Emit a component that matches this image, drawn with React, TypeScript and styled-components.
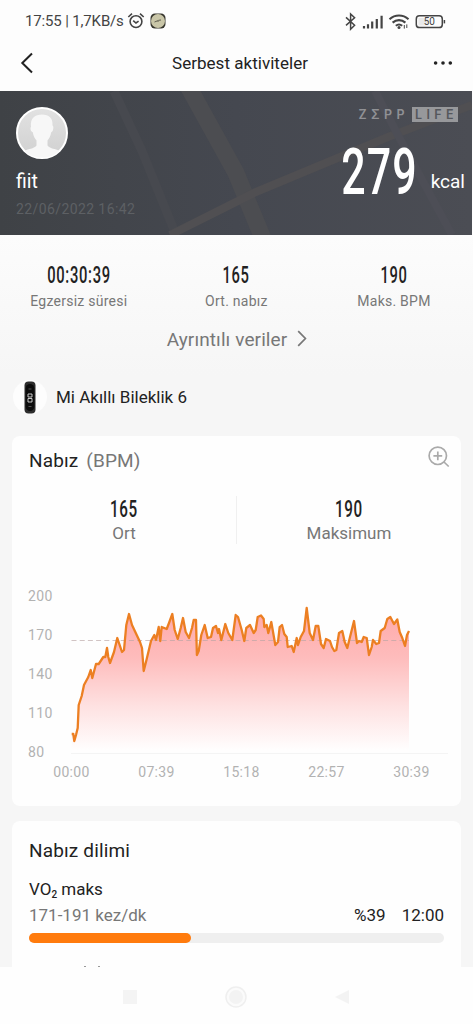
import styled, { createGlobalStyle } from "styled-components";

const heartRate: [number, number][] = [
  [71.7, 734], [73.3, 734], [74.3, 741], [76, 735], [77.7, 728], [78.7, 705], [81.7, 696], [84, 685],
  [88.3, 677], [90.7, 670], [92.3, 678], [96, 664], [98.7, 664], [103.3, 657], [105.3, 657], [107, 648],
  [108.3, 657], [110, 663], [114, 652], [117.3, 638], [122, 652], [124, 650], [126.3, 625], [129, 614],
  [132, 625], [140, 642], [142, 648], [143.7, 671], [146.7, 659], [151, 641], [154.3, 635], [156, 640],
  [158.7, 627], [160.3, 641], [161.7, 627], [166.7, 629], [169, 623], [172.3, 614], [174.7, 630], [177.7, 639],
  [180.7, 628], [183, 618], [185.7, 632], [189, 638], [192, 628], [193.7, 620], [196, 620], [196.9, 655],
  [198.7, 651], [201.3, 635], [204.7, 625], [207.7, 638], [211, 637], [213, 628], [216, 626], [218, 633],
  [219, 629], [221.3, 640], [225.3, 624], [228.3, 633], [232.3, 640], [235.7, 615], [238, 617], [241.7, 630],
  [244.3, 641], [246.3, 628], [250, 625], [253.7, 633], [255.7, 630], [257.7, 617], [261, 615.5], [263.7, 619],
  [264.3, 627], [266.7, 625], [268.3, 633], [271.3, 622], [275.3, 645], [278, 642], [279.7, 627], [282, 625],
  [284.3, 634], [286.7, 637], [287.7, 647], [291.7, 646], [293.7, 652], [296.7, 638], [298, 645], [300.7, 637],
  [304, 631], [306.7, 608], [309.7, 633], [313, 640], [315.7, 626], [318.3, 626], [321, 644], [323.7, 648],
  [326, 639], [330, 641], [332, 647], [334.3, 651], [336.3, 650], [339, 633], [342.3, 631], [344.7, 642],
  [347.3, 648], [351, 633], [354, 621], [357, 643], [359, 641], [361.7, 642], [363.7, 637], [366.7, 638],
  [369, 655], [371.7, 647], [373, 640], [376.3, 644], [379, 643], [380.7, 631], [384.7, 628], [387.3, 619],
  [390.3, 617], [394, 624], [397.3, 619.5], [399.7, 632], [402.3, 638], [405, 646], [407, 635], [409, 631],
];

const line = heartRate.map(([x, y]) => `${x},${y}`).join(" ");

const yTicks = [
  { label: "200", y: 600.5 },
  { label: "170", y: 639.5 },
  { label: "140", y: 679 },
  { label: "110", y: 718 },
  { label: "80", y: 757 },
];

const xTicks = [
  { label: "00:00", x: 71.5 },
  { label: "07:39", x: 156.5 },
  { label: "15:18", x: 241.5 },
  { label: "22:57", x: 326.5 },
  { label: "30:39", x: 411.5 },
];

const stats = [
  { value: "00:30:39", label: "Egzersiz süresi" },
  { value: "165", label: "Ort. nabız" },
  { value: "190", label: "Maks. BPM" },
];

function StatusIcons() {
  return (
    <svg width="104" height="20" viewBox="343 10 104 20" fill="none" stroke="#444" strokeWidth="1.5">
      <path d="M346 16.4l8.6 7.8-4 4V13l4 3.8-8.6 7.6" />
      <g strokeWidth="2.2">
        <path d="M364 27.5v-2.6M368 27.5v-4.2M372.2 27.5v-7M376.8 27.5v-9.6M381.6 27.5v-12.7" />
      </g>
      <g strokeWidth="2.1">
        <path d="M389.5 18.2c5.5-5 13.5-5 19 0M392.6 21.6c3.8-3.3 9-3.3 12.8 0M395.8 24.8c2-1.6 4.4-1.6 6.4 0" />
      </g>
      <circle cx="399" cy="26.6" r="1.5" fill="#444" stroke="none" />
      <path d="M404.3 24v3.6M406.8 23.4v3.6" strokeWidth="1" />
      <rect x="416.3" y="14.8" width="26" height="11.8" rx="3.2" />
      <path d="M418.4 16.9h10v7.6h-10z" fill="#e9e9e9" stroke="none" />
      <path d="M444.4 19v3.4" strokeWidth="1.5" />
      <text x="429.3" y="24.2" textAnchor="middle" fontSize="10" fill="#444" stroke="none">
        50
      </text>
    </svg>
  );
}

function HeartChart() {
  return (
    <svg width="449" height="226" viewBox="12 580 449 226">
      <defs>
        <linearGradient id="fade" gradientUnits="userSpaceOnUse" x1="0" y1="608" x2="0" y2="750">
          <stop offset="0" stopColor="#ffa8a8" />
          <stop offset="0.35" stopColor="#febcbc" />
          <stop offset="0.7" stopColor="#fee2e2" />
          <stop offset="1" stopColor="#fffefe" />
        </linearGradient>
      </defs>
      <path d="M71 753.5H448" stroke="#f4f4f4" />
      <polygon points={`71.7,752 ${line} 409,752`} fill="url(#fade)" />
      <path d="M71.5 640.5H409" stroke="#b9a5a5" strokeOpacity="0.65" strokeDasharray="5 3.2" />
      <polyline points={line} fill="none" stroke="#ec7f22" strokeWidth="2.3" strokeLinejoin="round" />
      <g fontSize="14" fill="#b2b2b2" letterSpacing="0.35">
        {yTicks.map((t) => (
          <text key={t.label} x="28" y={t.y}>
            {t.label}
          </text>
        ))}
        {xTicks.map((t) => (
          <text key={t.label} x={t.x} y="777" textAnchor="middle">
            {t.label}
          </text>
        ))}
      </g>
    </svg>
  );
}

export default function App() {
  return (
    <Phone>
      <GlobalStyle />

      <StatusBar>
        <span>17:55 | 1,7KB/s</span>
        <svg width="18" height="18" viewBox="0 0 18 18" fill="none" stroke="#444" strokeWidth="1.6">
          <circle cx="9" cy="9.6" r="5.9" />
          <path d="M1.3 5L5 1.7M16.7 5L13 1.7M6.2 8.6L9 11l2.6-1.8" />
        </svg>
        <svg className="app" width="16" height="16" viewBox="0 0 16 16">
          <rect x="0.5" y="0.5" width="15" height="15" rx="4.5" fill="#35342c" />
          <circle cx="8" cy="8" r="7" fill="#c9c6a8" />
          <path d="M4.5 9l3-1.2M8.5 7.3L11 7M8 7v2" stroke="#555346" strokeWidth="0.9" />
        </svg>
        <StatusIcons />
      </StatusBar>

      <NavBar>
        <svg width="14" height="22" viewBox="0 0 14 22" fill="none" stroke="#222" strokeWidth="2">
          <path d="M12 1.5L2.3 11 12 20.5" />
        </svg>
        <h1>Serbest aktiviteler</h1>
        <svg width="20" height="6" viewBox="0 0 20 6" fill="#222">
          <circle cx="2.6" cy="3" r="1.8" />
          <circle cx="10" cy="3" r="1.8" />
          <circle cx="17.3" cy="3" r="1.8" />
        </svg>
      </NavBar>

      <Hero>
        <MapBackdrop width="472" height="144" viewBox="0 0 472 144" fill="none">
          <path d="M114 0L142 60 176 144" stroke="#47494f" strokeWidth="9" />
          <path d="M188 -5L236 82 264 150" stroke="#4c4d51" strokeWidth="17" />
          <path d="M170 144L256 101 388 46 472 14" stroke="#504f52" strokeWidth="8" />
          <path d="M375 0L400 48 452 144" stroke="#4d4e56" strokeWidth="8" />
        </MapBackdrop>
        <Profile>
          <svg width="52" height="52" viewBox="0 0 52 52">
            <defs>
              <linearGradient id="face" x1="0" y1="0" x2="0" y2="1">
                <stop offset="0" stopColor="#e2e2e2" />
                <stop offset="1" stopColor="#d0d0d0" />
              </linearGradient>
            </defs>
            <circle cx="26" cy="26" r="25" fill="url(#face)" stroke="#fff" strokeWidth="2" />
            <path
              d="M15 20c-1-9 4-12.5 11-12.5S37 11 36.5 18.5c1.5.5 1 6-1.3 6.7-.6 4-2.2 6.300-3.700 8.300v5c3 3.500 8 3.200 11.500 5.300C39 49 32 50.500 26 50.500S13 49 9 43.800c3.500-2.100 8.500-1.800 11.500-5.300v-5c-1.500-2-3.100-4.300-3.700-8.300C14.500 24.500 14 20.500 15 20z"
              fill="#f7f7f7"
            />
          </svg>
          <div className="name">fiit</div>
          <div className="date">22/06/2022 16:42</div>
        </Profile>
        <Energy>
          <Brand>
            <span>ZΣPP</span>
            <b>LIFE</b>
          </Brand>
          <div className="total">
            <Digits $size={65} $width={81} $squeeze={0.66} $spacing={1.8}>
              279
            </Digits>
            <span className="unit">kcal</span>
          </div>
        </Energy>
      </Hero>

      <Body>
        <Stats>
          {stats.map((s) => (
            <Stat key={s.label}>
              <Digits $size={23} $width={90} $squeeze={0.64} $spacing={1.1}>
                {s.value}
              </Digits>
              <p>{s.label}</p>
            </Stat>
          ))}
        </Stats>

        <MoreLink>
          Ayrıntılı veriler
          <svg width="10" height="17" viewBox="0 0 10 17" fill="none" stroke="#777" strokeWidth="1.7">
            <path d="M1.2 1.2L8.4 8.5 1.2 15.8" />
          </svg>
        </MoreLink>

        <Device>
          <div className="icon">
            <svg width="12" height="33" viewBox="0 0 12 33">
              <rect x="0.5" y="0.5" width="11" height="32" rx="4" fill="#2d2d2d" />
              <rect x="1.6" y="3" width="8.8" height="27" rx="4.4" fill="#0c0c0c" />
              <path d="M4 13h4v3H4zM4 17.5h4v3.5H4z" fill="none" stroke="#ddd" strokeWidth="0.9" />
              <path d="M4.5 8h3M4.5 25.5h3" stroke="#666" strokeWidth="0.8" />
            </svg>
          </div>
          Mi Akıllı Bileklik 6
        </Device>

        <Card $height={370}>
          <CardHead>
            <h2>
              Nabız <span>(BPM)</span>
            </h2>
            <svg width="22" height="22" viewBox="0 0 22 22" fill="none" stroke="#aaa" strokeWidth="1.7">
              <circle cx="9.8" cy="9.8" r="8.7" />
              <path d="M16 16l4.7 4.5M9.8 5.4v8.8M5.4 9.8h8.8" />
            </svg>
          </CardHead>
          <Summary>
            <div>
              <Digits $size={24.5} $width={60} $squeeze={0.62} $spacing={1}>
                165
              </Digits>
              <p>Ort</p>
            </div>
            <div>
              <Digits $size={24.5} $width={60} $squeeze={0.62} $spacing={1}>
                190
              </Digits>
              <p>Maksimum</p>
            </div>
          </Summary>
          <HeartChart />
        </Card>

        <Card $height={147}>
          <Zones>
            <h2>Nabız dilimi</h2>
            <h3>
              VO<sub>2</sub> maks
            </h3>
            <div className="row">
              <span className="range">171-191 kez/dk</span>
              <span>%39</span>
              <span>12:00</span>
            </div>
            <Track>
              <Fill $percent={39} />
            </Track>
            <NextRow>
              <i />
              <i />
            </NextRow>
          </Zones>
        </Card>
      </Body>

      <SystemNav>
        <svg width="16" height="16" viewBox="0 0 16 16">
          <rect x="1" y="1" width="14" height="14" fill="#f4f4f4" />
        </svg>
        <svg width="24" height="24" viewBox="0 0 24 24">
          <circle cx="12" cy="12" r="10" fill="#fbfbfb" stroke="#efefef" strokeWidth="1.5" />
          <circle cx="12" cy="12" r="7" fill="#f3f3f3" />
        </svg>
        <svg width="16" height="16" viewBox="0 0 16 16">
          <path d="M1 8l14-7v14z" fill="#f3f3f3" />
        </svg>
      </SystemNav>
    </Phone>
  );
}

const GlobalStyle = createGlobalStyle`
  body {
    margin: 0;
    background: #fdfdfd;
    font-family: Roboto, "Liberation Sans", sans-serif;
    color: #222;
  }

  * {
    box-sizing: border-box;
  }

  h1, h2, h3, p {
    margin: 0;
    font-weight: 400;
  }

  svg {
    display: block;
    flex: none;
  }
`;

const Phone = styled.div`
  width: 473px;
  height: 1024px;
  display: flex;
  flex-direction: column;
  overflow: hidden;
  white-space: nowrap;
`;

const StatusBar = styled.div`
  height: 41px;
  padding: 0 26px 0 25px;
  display: flex;
  align-items: center;
  font-size: 15px;
  letter-spacing: -0.15px;
  color: #444;

  span {
    width: 102px;
  }

  .app {
    margin: 0 auto 0 5px;
  }
`;

const NavBar = styled.div`
  height: 50px;
  padding: 0 20px 7px;
  display: flex;
  align-items: center;
  justify-content: space-between;

  h1 {
    font-size: 17px;
    letter-spacing: 0.03px;
    padding-left: 13px;
  }
`;

const Hero = styled.div`
  position: relative;
  width: 472px;
  height: 144px;
  display: flex;
  justify-content: space-between;
  background: linear-gradient(90deg, #3f4246, #454850 50%, #4b4d54);
  color: #fff;
`;

const MapBackdrop = styled.svg`
  position: absolute;
  top: 0;
  left: 0;
`;

const Profile = styled.div`
  position: relative;
  padding: 16px 0 0 16px;

  .name {
    margin-top: 11px;
    font-size: 19.5px;
    line-height: 24px;
  }

  .date {
    margin-top: 6px;
    font-size: 14px;
    line-height: 18px;
    letter-spacing: 0.4px;
    color: #5d6064;
  }
`;

const Energy = styled.div`
  position: relative;
  padding: 16px 7px 0 0;

  .total {
    display: flex;
    justify-content: flex-end;
    margin-top: 15px;
    line-height: 70px;
  }

  .unit {
    margin-left: 11px;
    padding-top: 33px;
    font-size: 19px;
    line-height: 24px;
  }
`;

const Brand = styled.div`
  display: flex;
  justify-content: flex-end;
  align-items: center;
  gap: 3px;
  padding-right: 7px;
  font: 600 12.5px/15px Inter, sans-serif;
  letter-spacing: 4.4px;
  color: #909195;

  b {
    height: 15px;
    padding-left: 3px;
    font-weight: 600;
    background: #97989b;
    color: #55575c;
  }
`;

/* condensed numerals: squeezed on x around the centre of a fixed box */
const Digits = styled.div<{ $size: number; $width: number; $squeeze: number; $spacing: number }>`
  width: ${(p) => p.$width}px;
  display: flex;
  justify-content: center;
  font-size: ${(p) => p.$size}px;
  font-weight: 500;
  letter-spacing: ${(p) => p.$spacing}px;
  transform: scaleX(${(p) => p.$squeeze});
`;

const Body = styled.div`
  height: 732px;
  overflow: hidden;
  background: linear-gradient(#fcfcfc, #f6f6f6 140px);
`;

const Stats = styled.div`
  display: grid;
  grid-template-columns: repeat(3, 157.6px);
  padding-top: 27px;
`;

const Stat = styled.div`
  display: flex;
  flex-direction: column;
  align-items: center;
  line-height: 28px;

  p {
    margin-top: 1px;
    font-size: 14px;
    line-height: 20px;
    letter-spacing: 0.25px;
    color: #777;
  }
`;

const MoreLink = styled.div`
  display: flex;
  align-items: center;
  justify-content: center;
  gap: 10px;
  margin-top: 14px;
  padding-left: 1px;
  height: 28px;
  font-size: 19px;
  letter-spacing: 0.1px;
  color: #777;

  svg {
    margin-bottom: 1px;
  }
`;

const Device = styled.div`
  display: flex;
  align-items: center;
  gap: 9px;
  margin-top: 26px;
  padding-left: 13px;
  height: 36px;
  font-size: 17px;

  .icon {
    width: 34px;
    height: 34px;
    display: flex;
    align-items: center;
    justify-content: center;
    border-radius: 50%;
    background: #fdfdfd;
  }
`;

const Card = styled.div<{ $height: number }>`
  width: 449px;
  height: ${(p) => p.$height}px;
  margin: 21px 0 0 12px;
  border-radius: 8px;
  background: #fefefe;

  & + & {
    margin-top: 15px;
    border-radius: 8px 8px 0 0;
  }

  h2 {
    font-size: 19px;
    line-height: 24px;
    letter-spacing: 0.15px;
  }
`;

const CardHead = styled.div`
  height: 58px;
  padding: 10px 11px 0 17px;
  display: flex;
  justify-content: space-between;

  h2 {
    padding-top: 3px;
  }

  h2 span {
    margin-left: 3px;
    color: #777;
  }
`;

const Summary = styled.div`
  height: 86px;
  display: flex;

  div {
    line-height: 30px;
  }

  > div {
    height: 52px;
    flex: 1;
    display: flex;
    flex-direction: column;
    align-items: center;
  }

  > div + div {
    height: 48px;
    margin-top: 2px;
    border-left: 1px solid #f0f0f0;

    > div {
      margin-top: -2px;
    }
  }

  p {
    margin-top: -2px;
    font-size: 17px;
    line-height: 22px;
    color: #777;
  }
`;

const Zones = styled.div`
  padding: 18px 17px 0;

  h3 {
    margin-top: 15px;
    font-size: 17px;
    line-height: 22px;
  }

  sub {
    font-size: 10px;
    font-weight: 500;
    line-height: 0;
    vertical-align: -3px;
  }

  .row {
    display: flex;
    gap: 16px;
    margin-top: 4px;
    font-size: 17px;
    line-height: 22px;
  }

  .range {
    margin-right: auto;
    color: #777;
  }
`;

const Track = styled.div`
  height: 10px;
  margin-top: 7px;
  border-radius: 5px;
  background: #efefef;
`;

const Fill = styled.div<{ $percent: number }>`
  width: ${(p) => p.$percent}%;
  height: 10px;
  border-radius: 5px;
  background: #ff7b0d;
`;

/* only the tops of the next zone's title reach above the navigation bar */
const NextRow = styled.div`
  display: flex;
  gap: 12px;
  padding: 23px 0 0 55px;

  i {
    width: 2px;
    height: 1px;
    background: #999;
  }
`;

const SystemNav = styled.div`
  height: 57px;
  padding: 3px 123px 0 122px;
  display: flex;
  align-items: center;
  justify-content: space-between;
  background: #fefefe;
`;
